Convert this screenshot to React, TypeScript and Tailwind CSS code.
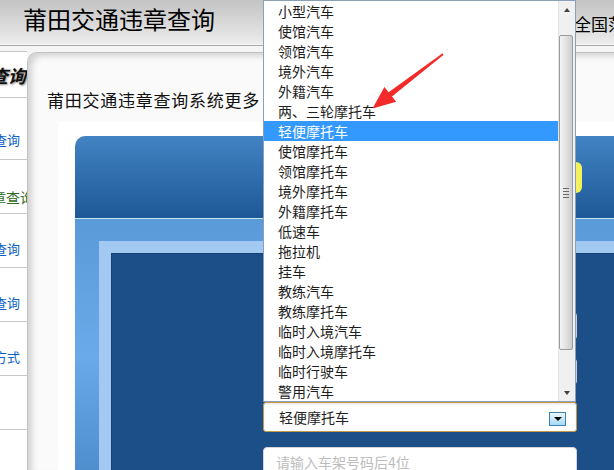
import React from "react";

const vehicleTypes = [
  "小型汽车",
  "使馆汽车",
  "领馆汽车",
  "境外汽车",
  "外籍汽车",
  "两、三轮摩托车",
  "轻便摩托车",
  "使馆摩托车",
  "领馆摩托车",
  "境外摩托车",
  "外籍摩托车",
  "低速车",
  "拖拉机",
  "挂车",
  "教练汽车",
  "教练摩托车",
  "临时入境汽车",
  "临时入境摩托车",
  "临时行驶车",
  "警用汽车",
];

const selectedType = "轻便摩托车";

function SideNav() {
  return (
    <aside className="w-[27px] shrink-0 bg-[#f5f5f5] pt-[5px]">
      <div className="border-t border-[#c8c8c8] bg-white">
        <div className="flex h-[46px] items-center justify-end overflow-hidden border-b border-[#c8c8c8]">
          <span className="mr-[1px] shrink-0 whitespace-nowrap text-[18px] font-bold italic leading-[24px] text-[#111] [text-shadow:1px_1px_2px_#8a8a8a]">
            违章查询
          </span>
        </div>
        <div className="flex h-[62px] justify-end overflow-hidden border-b border-[#c8c8c8] pt-[32px]">
          <span className="mr-[7px] shrink-0 whitespace-nowrap text-[13px] leading-[20px] text-[#0b62c4]">车辆查询</span>
        </div>
        <div className="flex h-[54px] justify-end overflow-hidden border-b border-[#c8c8c8] pt-[27px]">
          <span className="mr-[-7px] shrink-0 whitespace-nowrap text-[14px] leading-[20px] text-[#2f6b1e]">违章查询</span>
        </div>
        <div className="flex h-[54px] justify-end overflow-hidden border-b border-[#c8c8c8] pt-[25px]">
          <span className="mr-[7px] shrink-0 whitespace-nowrap text-[13px] leading-[20px] text-[#0b62c4]">驾驶证查询</span>
        </div>
        <div className="flex h-[54px] justify-end overflow-hidden border-b border-[#c8c8c8] pt-[25px]">
          <span className="mr-[7px] shrink-0 whitespace-nowrap text-[13px] leading-[20px] text-[#0b62c4]">事故查询</span>
        </div>
        <div className="flex h-[54px] justify-end overflow-hidden border-b border-[#c8c8c8] pt-[25px]">
          <span className="mr-[7px] shrink-0 whitespace-nowrap text-[13px] leading-[20px] text-[#0b62c4]">联系方式</span>
        </div>
        <div className="h-[54px] border-b border-[#c8c8c8]" />
        <div className="h-[60px]" />
      </div>
    </aside>
  );
}

function QueryForm() {
  return (
    <div className="flex w-[314px] flex-col">
      <div className="h-[28px] rounded-[4px] border border-[#d0d0d0] bg-white" />
      <div className="mt-[18px] h-[27px] rounded-[4px] border border-[#d0d0d0] bg-white" />
      <div className="mt-[17px] flex h-[30px] items-center rounded-[3px] border border-[#c39a45] bg-white pl-[15px] pr-[10px] shadow-[inset_0_1px_2px_rgba(0,0,0,0.12)]">
        <span className="text-[14px] leading-[20px] text-[#222]">{selectedType}</span>
        <span className="ml-auto mt-[4px] flex h-[14px] w-[17px] items-center justify-center border border-[#3c7fb1] bg-gradient-to-b from-[#eaf6fd] to-[#a8d8f4]">
          <span className="h-0 w-0 border-x-[4px] border-t-[4px] border-x-transparent border-t-black" />
        </span>
      </div>
      <div className="mt-[15px] flex h-[30px] items-center rounded-[4px] border border-[#d6d6d6] bg-white pl-[12px]">
        <span className="text-[14px] leading-[20px] text-[#bdbdbd]">请输入车架号码后4位</span>
      </div>
    </div>
  );
}

function TypeList() {
  return (
    <div className="absolute left-[263px] top-0 flex h-[402px] w-[313px] border border-[#8b9fb8] bg-white">
      <ul className="w-[294px]">
        {vehicleTypes.map((type) => (
          <li
            key={type}
            className={
              type === selectedType
                ? "h-[20px] bg-[#3399ff] pl-[14px] text-[14px] leading-[20px] text-white"
                : "h-[20px] pl-[14px] text-[14px] leading-[20px] text-[#1e1e1e]"
            }
          >
            {type}
          </li>
        ))}
      </ul>
      <div className="flex w-[17px] flex-col border-l border-[#e4e4e4] bg-[#f0f0f0]">
        <div className="flex h-[17px] items-center justify-center">
          <span className="h-0 w-0 border-x-[3.5px] border-b-[4px] border-x-transparent border-b-[#404040]" />
        </div>
        <div className="mt-[17px] flex h-[315px] w-[14px] items-center justify-center rounded-[2px] border border-[#9c9c9c] bg-gradient-to-r from-[#f4f4f4] via-[#e2e2e2] to-[#cdcdcd]">
          <div className="flex flex-col gap-[2px]">
            <span className="h-px w-[6px] bg-[#6a6a6a]" />
            <span className="h-px w-[6px] bg-[#6a6a6a]" />
            <span className="h-px w-[6px] bg-[#6a6a6a]" />
            <span className="h-px w-[6px] bg-[#6a6a6a]" />
          </div>
        </div>
        <div className="mt-auto flex h-[17px] items-center justify-center">
          <span className="h-0 w-0 border-x-[3.5px] border-t-[4px] border-x-transparent border-t-[#404040]" />
        </div>
      </div>
    </div>
  );
}

function PointerArrow() {
  return (
    <svg className="pointer-events-none absolute left-0 top-0" width="614" height="470" viewBox="0 0 614 470">
      <polygon
        points="442.6,53.3 443.6,54.7 392,96.6 396.2,101.8 372.5,108.5 384.4,87 388.6,92.2"
        fill="#f22a2a"
      />
    </svg>
  );
}

export default function App() {
  return (
    <div className="relative h-[470px] w-[614px] overflow-hidden bg-white font-['Noto_Sans_CJK_SC',sans-serif]">
      <header className="flex h-[44px] bg-gradient-to-b from-[#c3c3c3] to-[#ececec]">
        <h1 className="ml-[23px] mt-[3px] shrink-0 whitespace-nowrap text-[24px] leading-[32px] text-black">
          莆田交通违章查询
        </h1>
        <span className="ml-[359px] mt-[12px] shrink-0 whitespace-nowrap text-[17px] leading-[24px] text-black">
          全国范围
        </span>
      </header>
      <div className="h-px bg-[#f6f6f6]" />
      <div className="h-px bg-[#a9a9a9]" />

      <div className="flex h-[424px]">
        <SideNav />
        <main className="min-w-0 flex-1 bg-[#f5f5f5] pt-[6px]">
          <div className="h-full rounded-tl-[10px] border-l border-t border-[#c2c2c2] bg-[#fafafa] shadow-[inset_5px_4px_6px_-1px_rgba(0,0,0,0.16)]">
            <p className="whitespace-nowrap pl-[19px] pt-[35px] text-[17px] leading-[24px] tracking-[0.75px] text-[#111]">
              莆田交通违章查询系统更多
            </p>
            <div className="ml-[30px] mt-[10px] h-full bg-white pl-[17px] pt-[14px]">
              <div className="overflow-hidden rounded-tl-[10px]">
                <div className="h-[82px] bg-gradient-to-b from-[#4283c3] to-[#1e5997] pl-[400px] pt-[26px]">
                  <div className="h-[31px] w-[107px] rounded-r-[6px] bg-[#f3f15c]" />
                </div>
                <div className="h-px bg-[#c6e9f1]" />
                <div className="bg-gradient-to-b from-[#5a9ad8] via-[#6aaaea] to-[#4a88c8] pl-[24px] pt-[22px]">
                  <div className="bg-[#a1c9f1] pl-[12px] pt-[12px]">
                    <div className="h-[240px] border-l border-t border-[#153f70] bg-[#1c4f88] pl-[151px] pt-[58px]">
                      <QueryForm />
                    </div>
                  </div>
                </div>
              </div>
            </div>
          </div>
        </main>
      </div>

      <TypeList />
      <PointerArrow />
    </div>
  );
}
